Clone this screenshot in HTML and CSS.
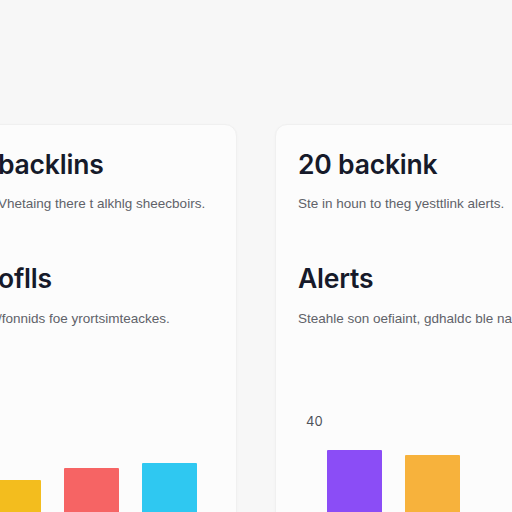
FILE: index.html
```html
<!DOCTYPE html>
<html lang="en">
<head>
<meta charset="utf-8">
<title>Backlinks dashboard</title>
<link rel="stylesheet" href="styles.css">
</head>
<body>
<main class="page">
  <section class="card card-left">
    <h2 class="title">backlins</h2>
    <p class="sub">Vhetaing there t alkhlg sheecboirs.</p>
    <h2 class="title title-second">oflls</h2>
    <p class="sub">/fonnids foe yrortsimteackes.</p>
    <div class="chart">
      <div class="axis-label"></div>
      <div class="bars bars-left">
        <div class="bar yellow" style="height:59px"></div>
        <div class="bar red" style="height:71px"></div>
        <div class="bar cyan" style="height:76px"></div>
      </div>
    </div>
  </section>
  <section class="card card-right">
    <h2 class="title">20 backink</h2>
    <p class="sub">Ste in houn to theg yesttlink alerts.</p>
    <h2 class="title title-second">Alerts</h2>
    <p class="sub">Steahle son oefiaint, gdhaldc ble nar</p>
    <div class="chart">
      <div class="axis-label">40</div>
      <div class="bars bars-right">
        <div class="bar purple" style="height:89px"></div>
        <div class="bar orange" style="height:84px"></div>
      </div>
    </div>
  </section>
</main>
</body>
</html>
```
FILE: styles.css
```css
html, body {
  margin: 0;
  padding: 0;
  height: 100%;
  overflow: hidden;
}
body {
  background: #f7f7f7;
  font-family: Inter, "Liberation Sans", Arial, sans-serif;
}
.page {
  display: flex;
  gap: 38px;
  padding-top: 124px;
  margin-left: -25px;
}
.card {
  flex: 0 0 262px;
  min-width: 0;
  box-sizing: border-box;
  height: 460px;
  background: #fcfcfc;
  border: 1px solid #f0f0f0;
  border-radius: 12px;
  box-shadow: 0 1px 3px rgba(0, 0, 0, 0.03);
  padding: 23px 22px 0;
}
.title {
  margin: 0;
  font-size: 26.5px;
  line-height: 32px;
  font-weight: 600;
  color: #161a2a;
  white-space: nowrap;
  letter-spacing: -0.2px;
}
.title-second {
  margin-top: 48px;
}
.sub {
  margin: 14px 0 0;
  font-family: "Liberation Sans", Arial, sans-serif;
  font-size: 13.5px;
  line-height: 20px;
  color: #606269;
  white-space: nowrap;
}
.title-second + .sub {
  margin-top: 15px;
}
.chart {
  margin-top: 84px;
}
.axis-label {
  height: 16px;
  font-size: 13px;
  line-height: 16px;
  color: #4f525a;
  padding-left: 8px;
}
.bars {
  display: flex;
  align-items: flex-end;
  gap: 23px;
  height: 100px;
  margin-top: 10px;
}
.bars-left {
  margin-left: -12px;
}
.bars-right {
  padding-left: 29px;
}
.bar {
  width: 55px;
  flex: 0 0 55px;
  border-radius: 1px 1px 0 0;
}
.yellow { background: #f3bd1e; }
.red { background: #f66464; }
.cyan { background: #2fc8f1; }
.purple { background: #8b4df6; }
.orange { background: #f7b23c; }
```
